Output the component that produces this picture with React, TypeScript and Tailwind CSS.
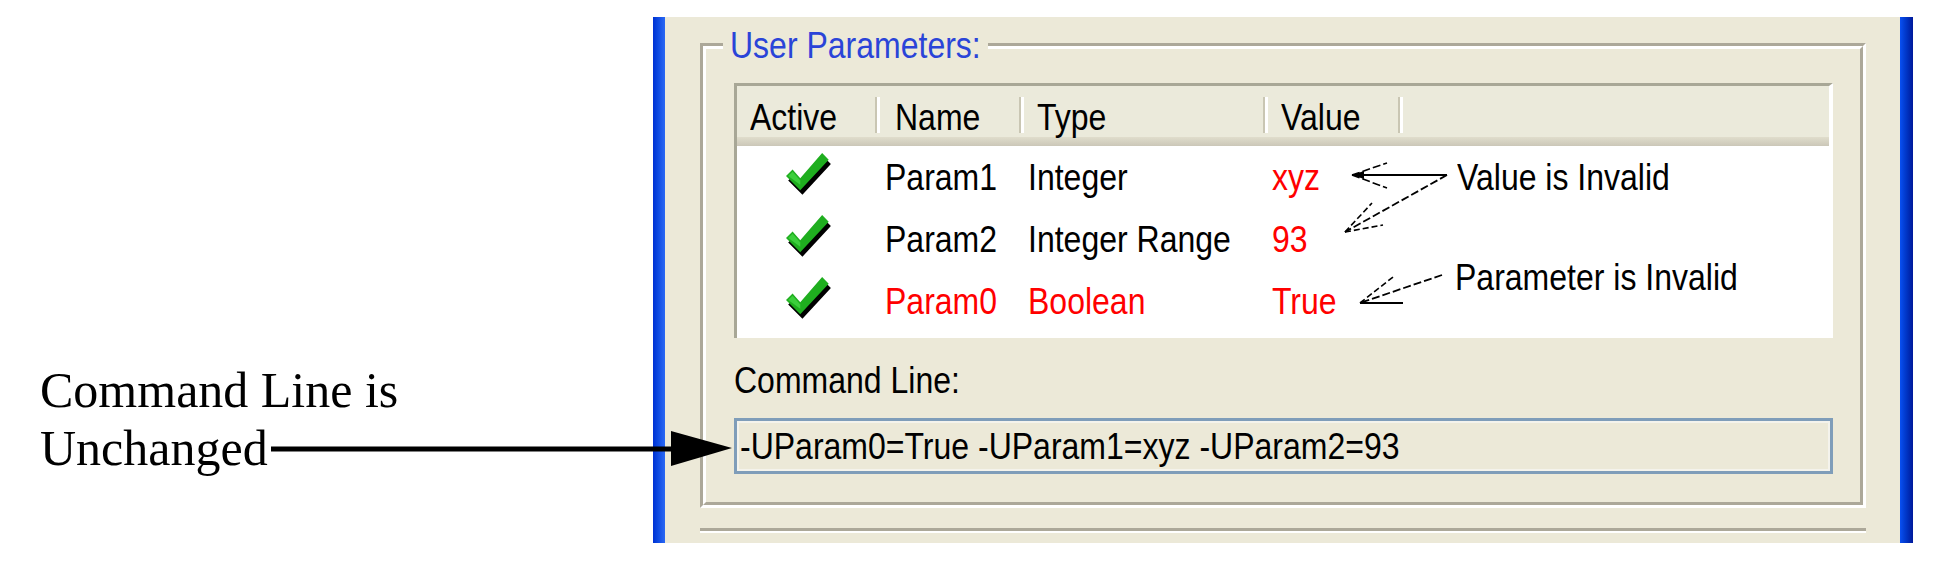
import React from "react";

// the screenshot was stretched vertically, so the UI text is drawn a bit taller than it is wide
const ui = "font-['Liberation_Sans',Arial,sans-serif] text-[32px] leading-none whitespace-nowrap";

type Row = { name: string; type: string; value: string; invalid: boolean };

const rows: Row[] = [
  { name: "Param1", type: "Integer", value: "xyz", invalid: false },
  { name: "Param2", type: "Integer Range", value: "93", invalid: false },
  { name: "Param0", type: "Boolean", value: "True", invalid: true },
];

function T({ children }: { children: React.ReactNode }) {
  return <span className="inline-block origin-[0_27px] scale-y-[1.17]">{children}</span>;
}

function Check() {
  return (
    <svg width="46" height="44" viewBox="0 0 42 40">
      <polygon points="2,25 8,19 15,27 35,4 41,10 15,38" fill="#000" />
      <polygon points="0,21 6,15 13,23 33,0 39,6 13,34" fill="#1fae1f" />
      <polygon points="2,21 6,17 13,25 13,29" fill="#3ccf3c" />
    </svg>
  );
}

function Sep() {
  return <div className="w-[5px] h-[36px] mt-[11px] border-l-2 border-[#c9c6b3] bg-white" />;
}

export default function App() {
  return (
    <div className="relative flex w-[1950px] h-[562px] bg-white overflow-hidden">
      {/* left annotation */}
      <div className="w-[653px] shrink-0 pl-[40px] pt-[361px] font-['Liberation_Serif',serif] text-[50px] leading-[58px] text-black">
        <div>Command Line is</div>
        <div>Unchanged</div>
      </div>

      {/* window */}
      <div className="mt-[17px] h-[526px] w-[1260px] flex shrink-0">
        <div className="w-[12px] bg-linear-to-r from-[#0030d4] to-[#2a68f4]" />
        <div className="flex-1 bg-[#ece9d8] pl-[35px] pt-[26px]">
          {/* group box */}
          <div className="relative w-[1166px] border-[3px] border-t-[#aca899] border-l-[#aca899] border-r-white border-b-white">
            <div className={`absolute left-[20px] -top-[15px] px-[7px] bg-[#ece9d8] text-[#2a44d8] ${ui}`}>
              <T>User Parameters:</T>
            </div>
            <div className="border-[3px] border-t-white border-l-white border-r-[#aca899] border-b-[#aca899] pl-[28px] pr-[27px] pt-[34px] pb-[28px]">
              {/* list view */}
              <div className={`h-[255px] bg-white border-t-[3px] border-l-[3px] border-r-[4px] border-t-[#a8a796] border-l-[#a8a796] border-r-white ${ui} text-black`}>
                <div className="h-[60px] bg-[#ebeadb] flex flex-col">
                  <div className="flex h-[51px]">
                    <div className="w-[138px] pl-[13px] pt-[17px]"><T>Active</T></div>
                    <Sep />
                    <div className="w-[139px] pl-[15px] pt-[17px]"><T>Name</T></div>
                    <Sep />
                    <div className="w-[239px] pl-[13px] pt-[17px]"><T>Type</T></div>
                    <Sep />
                    <div className="w-[130px] pl-[13px] pt-[17px]"><T>Value</T></div>
                    <Sep />
                  </div>
                  <div className="h-[9px] bg-linear-to-b from-[#e0ddcc] to-[#cbc7b8]" />
                </div>
                {rows.map((r) => (
                  <div key={r.name} className="flex h-[62px]">
                    <div className="w-[143px] pl-[49px] pt-[7px]">
                      <Check />
                    </div>
                    <div className={`w-[144px] pl-[5px] pt-[17px] ${r.invalid ? "text-[#ff0000]" : ""}`}><T>{r.name}</T></div>
                    <div className={`w-[244px] pl-[4px] pt-[17px] ${r.invalid ? "text-[#ff0000]" : ""}`}><T>{r.type}</T></div>
                    <div className="pl-[4px] pt-[17px] text-[#ff0000]"><T>{r.value}</T></div>
                  </div>
                ))}
              </div>

              <div className={`mt-[28px] ${ui} text-black`}><T>Command Line:</T></div>

              <div className={`mt-[20px] h-[56px] border-[3px] border-[#7f9db9] shadow-[inset_0_0_0_2px_#f4f3ec] pl-[3px] pt-[11px] ${ui} text-black`}>
                <T>-UParam0=True -UParam1=xyz -UParam2=93</T>
              </div>
            </div>
          </div>

          {/* next group box edge */}
          <div className="mt-[20px] w-[1166px] h-[15px] border-t-[3px] border-[#aca899]">
            <div className="h-[2px] bg-white" />
          </div>
        </div>
        <div className="w-[13px] bg-linear-to-r from-[#0a50f2] to-[#00189a]" />
      </div>

      {/* annotation callouts over the window */}
      <div className={`absolute left-[1457px] top-[163px] ${ui} text-black`}><T>Value is Invalid</T></div>
      <div className={`absolute left-[1455px] top-[263px] ${ui} text-black`}><T>Parameter is Invalid</T></div>

      <svg className="absolute inset-0 pointer-events-none" width="1950" height="562" viewBox="0 0 1950 562">
        {/* command line arrow */}
        <line x1="271" y1="449" x2="674" y2="449" stroke="#000" strokeWidth="5" />
        <polygon points="671,431 732,448 671,466" fill="#000" />

        {/* value is invalid -> xyz */}
        <line x1="1447" y1="175" x2="1354" y2="175" stroke="#000" strokeWidth="2" />
        <polygon points="1352,175 1364,171 1364,179" fill="#000" />
        <line x1="1352" y1="175" x2="1387" y2="163" stroke="#000" strokeWidth="1.6" strokeDasharray="8 3" />
        <line x1="1352" y1="175" x2="1387" y2="188" stroke="#000" strokeWidth="1.6" strokeDasharray="8 3" />

        {/* value is invalid -> 93 */}
        <line x1="1447" y1="175" x2="1345" y2="232" stroke="#000" strokeWidth="1.8" strokeDasharray="8 3" />
        <line x1="1345" y1="232" x2="1372" y2="203" stroke="#000" strokeWidth="1.6" strokeDasharray="6 3" />
        <line x1="1345" y1="232" x2="1383" y2="225" stroke="#000" strokeWidth="1.6" strokeDasharray="6 3" />

        {/* parameter is invalid -> True */}
        <line x1="1442" y1="275" x2="1360" y2="303" stroke="#000" strokeWidth="1.8" strokeDasharray="8 3" />
        <line x1="1360" y1="303" x2="1393" y2="277" stroke="#000" strokeWidth="1.6" strokeDasharray="6 3" />
        <line x1="1360" y1="303" x2="1403" y2="303" stroke="#000" strokeWidth="2" />
      </svg>
    </div>
  );
}
